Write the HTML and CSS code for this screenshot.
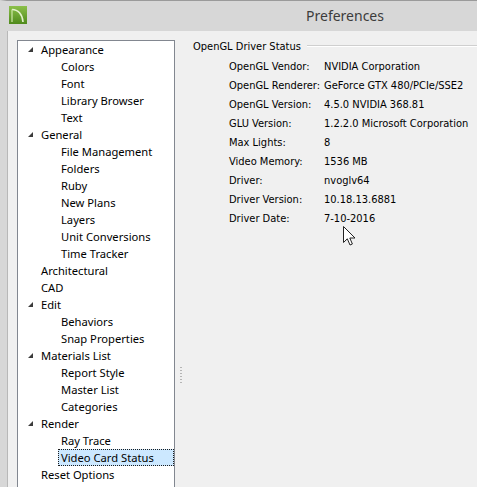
FILE: index.html
```html
<!DOCTYPE html>
<html lang="en">
<head>
  <meta charset="UTF-8" />
  <title>Preferences</title>
  <link rel="stylesheet" href="styles.css">
</head>
<body>
  <div class="window">
    <div class="titlebar">
      <svg class="app-icon" width="18" height="18" viewBox="0 0 18 18">
        <defs>
          <linearGradient id="g" x1="0" y1="0" x2="0" y2="1">
            <stop offset="0" stop-color="#8cc04a" />
            <stop offset="1" stop-color="#4f8a1c" />
          </linearGradient>
        </defs>
        <rect width="18" height="18" fill="url(#g)" />
        <path d="M3 3.5 C9 3.5 13.5 8 14 16" fill="none" stroke="#e4f2cf" stroke-width="1.6" />
        <path d="M3 3.5 V16" fill="none" stroke="#cfe7a8" stroke-width="1.2" />
      </svg>
      <div class="title">Preferences</div>
    </div>
    <div class="body">
      <div class="tree">
        <div class="node top open">Appearance</div>
        <div class="node child">Colors</div>
        <div class="node child">Font</div>
        <div class="node child">Library Browser</div>
        <div class="node child">Text</div>
        <div class="node top open">General</div>
        <div class="node child">File Management</div>
        <div class="node child">Folders</div>
        <div class="node child">Ruby</div>
        <div class="node child">New Plans</div>
        <div class="node child">Layers</div>
        <div class="node child">Unit Conversions</div>
        <div class="node child">Time Tracker</div>
        <div class="node top">Architectural</div>
        <div class="node top">CAD</div>
        <div class="node top open">Edit</div>
        <div class="node child">Behaviors</div>
        <div class="node child">Snap Properties</div>
        <div class="node top open">Materials List</div>
        <div class="node child">Report Style</div>
        <div class="node child">Master List</div>
        <div class="node child">Categories</div>
        <div class="node top open">Render</div>
        <div class="node child">Ray Trace</div>
        <div class="node child selected-row"><span class="selected">Video Card Status</span></div>
        <div class="node top">Reset Options</div>
      </div>
      <div class="splitter">
        <div class="grip"></div>
      </div>
      <div class="panel">
        <div class="group-title"><span>OpenGL Driver Status</span></div>
        <div class="info">
          <div class="label">OpenGL Vendor:</div><div class="value">NVIDIA Corporation</div>
          <div class="label">OpenGL Renderer:</div><div class="value">GeForce GTX 480/PCIe/SSE2</div>
          <div class="label">OpenGL Version:</div><div class="value">4.5.0 NVIDIA 368.81</div>
          <div class="label">GLU Version:</div><div class="value">1.2.2.0 Microsoft Corporation</div>
          <div class="label">Max Lights:</div><div class="value">8</div>
          <div class="label">Video Memory:</div><div class="value">1536 MB</div>
          <div class="label">Driver:</div><div class="value">nvoglv64</div>
          <div class="label">Driver Version:</div><div class="value">10.18.13.6881</div>
          <div class="label">Driver Date:</div><div class="value">7-10-2016</div>
        </div>
      </div>
    </div>
    <svg class="cursor" width="14" height="21" viewBox="0 0 14 21">
      <path d="M0.5 0.5 V16.5 L4.3 12.8 L7 19 L9.4 18 L6.8 12 H12 Z" fill="#fff" stroke="#222" stroke-width="1" stroke-linejoin="round" />
    </svg>
  </div>
</body>
</html>
```

FILE: styles.css
```css
* {
  margin: 0;
  padding: 0;
  box-sizing: border-box;
}
body {
  width: 477px;
  height: 487px;
  overflow: hidden;
  background: #f0f0f0;
  font-family: "Noto Sans", "Open Sans", sans-serif;
  color: #000;
}
.window {
  position: relative;
  height: 487px;
  border-left: 7px solid #d7d7d7;
  border-top: 1px solid #9a9a9a;
}
.titlebar {
  height: 30px;
  background: #d7d7d7;
  display: flex;
  align-items: center;
}
.app-icon {
  margin-left: 2px;
  margin-top: -3px;
}
.title {
  flex: 1;
  text-align: center;
  font-size: 14px;
  color: #3c3c3c;
  padding-left: 186px;
  padding-bottom: 2px;
}
.body {
  display: flex;
  padding: 9px 0 0 9px;
  border-left: 1px solid #b8b8b8;
  height: 456px;
}
.tree {
  width: 158px;
  background: #fff;
  border: 1px solid #828790;
  border-bottom: none;
  font-size: 11.2px;
  flex-shrink: 0;
}
.node {
  height: 17px;
  line-height: 17px;
  white-space: nowrap;
  position: relative;
}
.node.top {
  padding-left: 23px;
}
.node.child {
  padding-left: 43px;
}
.node.open::before {
  content: "";
  position: absolute;
  left: 10px;
  top: 6px;
  border-style: solid;
  border-width: 0 0 5px 5px;
  border-color: transparent transparent #3c3c3c transparent;
}
.node.selected-row {
  display: flex;
  padding-left: 40px;
  padding-right: 0;
}
.selected {
  flex: 1;
  height: 17px;
  padding-left: 2px;
  background: #cce8ff;
  border: 1px dotted #1c1c1c;
  line-height: 15px;
}
.splitter {
  width: 12px;
  display: flex;
  align-items: flex-start;
  justify-content: center;
  padding-top: 326px;
}
.grip {
  width: 2px;
  height: 17px;
  background-image: radial-gradient(circle, #b5b5b5 0.8px, transparent 1px);
  background-size: 2px 3px;
}
.panel {
  flex: 1;
  padding-left: 6px;
  font-family: "DejaVu Sans Condensed", "DejaVu Sans", sans-serif;
  font-size: 11px;
}
.group-title {
  display: flex;
  align-items: center;
  height: 14px;
  margin-top: -1px;
}
.group-title span {
  margin-right: 6px;
  white-space: nowrap;
}
.group-title::after {
  content: "";
  flex: 1;
  border-top: 1px solid #cfcfcf;
  border-bottom: 1px solid #fff;
}
.info {
  display: grid;
  grid-template-columns: 95px 1fr;
  grid-auto-rows: 19px;
  padding: 4px 0 0 36px;
}
.label,
.value {
  line-height: 19px;
  white-space: nowrap;
}
.cursor {
  position: absolute;
  left: 336px;
  top: 225px;
}
```
